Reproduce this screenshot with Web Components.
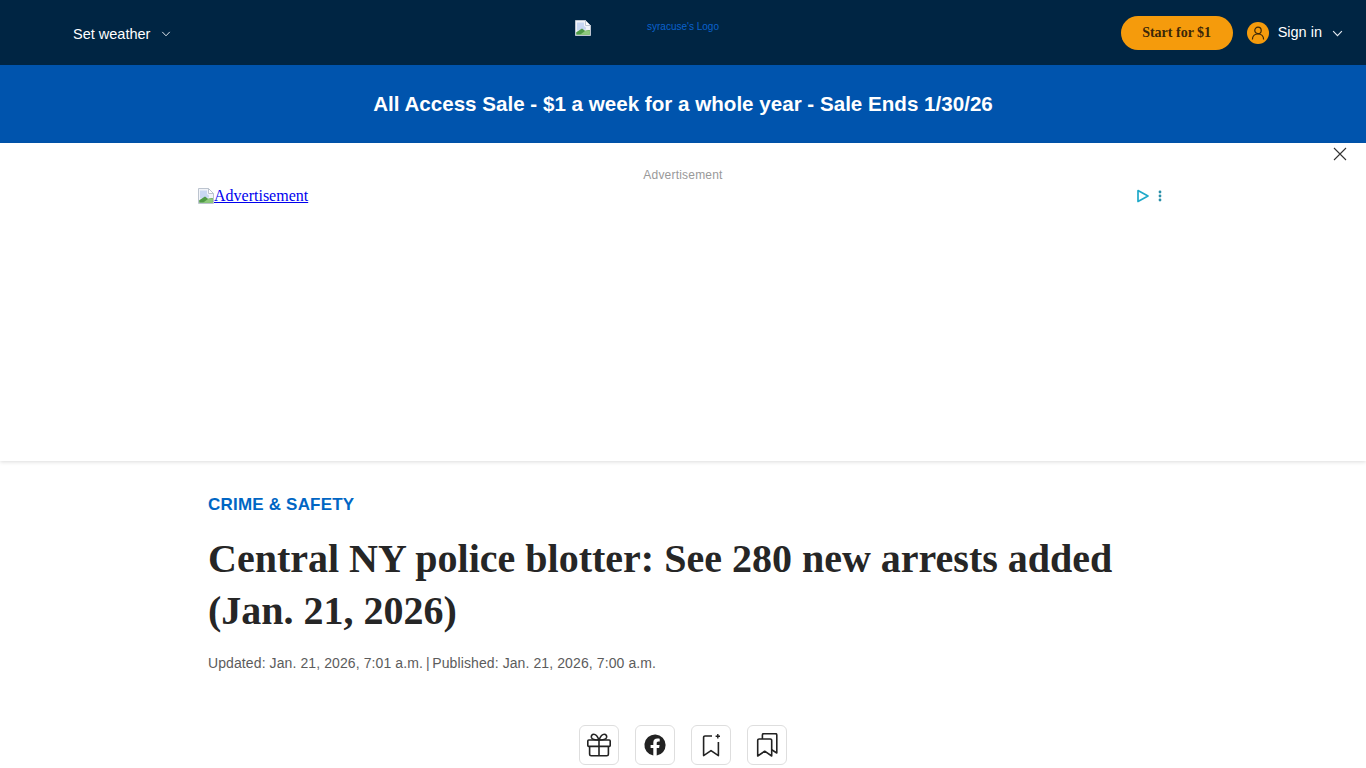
<!DOCTYPE html>
<html lang="en">
<head>
<meta charset="utf-8">
<title>Central NY police blotter</title>
<style>
    html, body { margin: 0; padding: 0; background: #fff; overflow: hidden; height: 768px; }
    body { font-family: "Liberation Sans", Arial, sans-serif; }
</style>
</head>
<body>
<site-header></site-header>
<promo-banner>All Access Sale - $1 a week for a whole year - Sale Ends 1/30/26</promo-banner>
<ad-slot></ad-slot>
<article-head
    section="CRIME &amp; SAFETY"
    headline="Central NY police blotter: See 280 new arrests added (Jan. 21, 2026)"
    updated="Updated: Jan. 21, 2026, 7:01 a.m."
    published="Published: Jan. 21, 2026, 7:00 a.m."></article-head>
<share-bar>
    <icon-button label="Gift this article">
        <svg viewBox="0 0 24 24" width="24" height="24" fill="none" stroke="#222" stroke-width="1.6" stroke-linejoin="round">
            <rect x="0.8" y="7" width="22.4" height="6.4" rx="1"/>
            <path d="M2.6 13.4v7.8a1.6 1.6 0 0 0 1.6 1.6h15.6a1.6 1.6 0 0 0 1.6-1.6v-7.8M12 7v15.8"/>
            <path d="M12 7C10.5 3.2 8.6 1.2 6.8 1.2 5 1.2 4 2.8 4.4 4.4 4.9 6.2 7 7 12 7ZM12 7c1.5-3.8 3.4-5.8 5.2-5.8 1.8 0 2.8 1.6 2.4 3.2-.5 1.8-2.6 2.6-7.6 2.6Z"/>
        </svg>
    </icon-button>
    <icon-button label="Share on Facebook">
        <svg viewBox="0 0 24 24" width="24" height="24">
            <path fill="#222" d="M22.6 12A10.6 10.6 0 1 0 10.3 22.5v-7.4H7.6V12h2.7V9.7c0-2.7 1.6-4.1 4-4.1 1.2 0 2.4.2 2.4.2v2.6h-1.3c-1.3 0-1.7.8-1.7 1.7V12h2.9l-.5 3.1h-2.4v7.4A10.6 10.6 0 0 0 22.6 12Z"/>
        </svg>
    </icon-button>
    <icon-button label="Save article">
        <svg viewBox="0 0 24 24" width="24" height="24" fill="none" stroke="#222" stroke-width="1.6" stroke-linejoin="round">
            <path d="M13 3H6A1.4 1.4 0 0 0 4.6 4.4v18.2l7.4-5 7.4 5V9"/>
            <path stroke-width="1.4" d="M18.8 1v4.4M16.6 3.2H21"/>
        </svg>
    </icon-button>
    <icon-button label="Saved articles">
        <svg viewBox="0 0 24 24" width="24" height="24" fill="none" stroke="#222" stroke-width="1.6" stroke-linejoin="round">
            <path d="M2.7 7.4A1.4 1.4 0 0 1 4.1 6h11.2a1.4 1.4 0 0 1 1.4 1.4v15.6l-7-4.8-7 4.8Z"/>
            <path d="M7.4 6V2a1.4 1.4 0 0 1 1.4-1.4h11.6A1.4 1.4 0 0 1 21.8 2v18l-5.1-3.2"/>
        </svg>
    </icon-button>
</share-bar>

<script>
// broken image glyph the browser shows when a picture fails
const brokenImg = `
    <svg viewBox="0 0 16 16" width="16" height="16" aria-hidden="true" style="flex:none">
        <path d="M.5.5h10l5 5v10H.5z" fill="#f2f4f9" stroke="#bcc4cf"/>
        <path d="M10.5.5l5 5h-5z" fill="#fff" stroke="#bcc4cf"/>
        <path d="M2 2.5h7v3.5l2 1.5v2l-9 1z" fill="#c8d7f2"/>
        <path d="M1.2 14.8v-2.6L7 8.6l3 2.2 4.8-.8v4.8z" fill="#4f9a45"/>
        <path d="M5 14.8 10 11l4.8-.4v4.2z" fill="#8fca7c"/>
    </svg>`;

const chevron = `
    <svg viewBox="0 0 12 8" width="11" height="7" fill="none" stroke="currentColor" stroke-width="1.3" aria-hidden="true">
        <path d="M1 1.2 6 6.4l5-5.2"/>
    </svg>`;

class SiteHeader extends HTMLElement {
    constructor() {
        super();
        this.attachShadow({ mode: "open" });
    }

    connectedCallback() {
        this.shadowRoot.innerHTML = `
            <style>
                :host {
                    display: grid;
                    grid-template-columns: 575px 1fr auto;
                    height: 65px;
                    background: #002543;
                    color: #fff;
                    box-sizing: border-box;
                    padding-right: 23px;
                    font-family: "Liberation Sans", Arial, sans-serif;
                }
                .weather {
                    display: flex;
                    align-items: center;
                    gap: 11px;
                    padding-left: 73px;
                    font-size: 14.5px;
                    padding-top: 2px;
                }
                .weather svg { margin-top: 1px; color: #e4eaf0; }
                .logo {
                    display: flex;
                    align-items: flex-start;
                    padding-top: 20px;
                    font-size: 10px;
                    line-height: 14px;
                    color: #0b62cc;
                }
                .logo span { margin-left: 56px; }
                .actions { display: flex; align-items: center; }
                .start {
                    display: flex;
                    align-items: center;
                    justify-content: center;
                    width: 112px;
                    height: 34px;
                    margin-top: 1px;
                    border-radius: 17px;
                    background: #f59b0c;
                    color: #3b2708;
                    font: bold 14px "Liberation Serif", "Times New Roman", serif;
                }
                .avatar {
                    width: 22px;
                    height: 22px;
                    margin-left: 14px;
                    margin-top: 1px;
                    border-radius: 50%;
                    background: #f59b0c;
                    display: flex;
                    align-items: center;
                    justify-content: center;
                }
                .signin { margin-left: 9px; font-size: 14.5px; margin-top: -2px; }
                .actions > svg { margin-left: 10px; margin-top: 2px; color: #e4eaf0; }
            </style>
            <div class="weather">Set weather ${chevron.replace('width="11" height="7"', 'width="10" height="6"')}</div>
            <div class="logo">${brokenImg}<span>syracuse's Logo</span></div>
            <div class="actions">
                <div class="start">Start for $1</div>
                <div class="avatar">
                    <svg viewBox="0 0 16 16" width="16" height="16" fill="none" stroke="#3b2708" stroke-width="1.2">
                        <circle cx="8" cy="5.4" r="3.2"/>
                        <path d="M2.4 14.4c0-3.4 2.4-5.6 5.6-5.6s5.6 2.2 5.6 5.6"/>
                    </svg>
                </div>
                <span class="signin">Sign in</span>
                ${chevron}
            </div>
        `;
    }
}

class PromoBanner extends HTMLElement {
    constructor() {
        super();
        this.attachShadow({ mode: "open" });
    }

    connectedCallback() {
        this.shadowRoot.innerHTML = `
            <style>
                :host {
                    display: flex;
                    align-items: center;
                    justify-content: center;
                    height: 78px;
                    background: #0054ad;
                    color: #fff;
                    font: bold 20.6px "Liberation Sans", Arial, sans-serif;
                }
            </style>
            <slot></slot>
        `;
    }
}

class AdSlot extends HTMLElement {
    constructor() {
        super();
        this.attachShadow({ mode: "open" });
    }

    connectedCallback() {
        this.shadowRoot.innerHTML = `
            <style>
                :host {
                    display: block;
                    position: relative;
                    height: 318px;
                    box-sizing: border-box;
                    padding-top: 24px;
                    background: #fff;
                    box-shadow: 0 1px 4px rgba(0, 0, 0, 0.14);
                }
                .label {
                    text-align: center;
                    font: 12px/15px "Liberation Sans", Arial, sans-serif;
                    letter-spacing: 0.2px;
                    color: #999;
                    padding-top: 1px;
                }
                .unit {
                    display: flex;
                    justify-content: space-between;
                    align-items: center;
                    width: 970px;
                    height: 18px;
                    margin: 3px 0 0 198px;
                    padding-top: 1px;
                }
                a {
                    display: flex;
                    align-items: center;
                    color: #0000ee;
                    font: 16px/18px "Liberation Serif", "Times New Roman", serif;
                    text-decoration: underline;
                }
                .choices { display: flex; align-items: center; gap: 7px; margin-right: 5px; }
                .close {
                    position: absolute;
                    top: 4px;
                    right: 19px;
                    width: 14px;
                    height: 14px;
                }
            </style>
            <div class="label">Advertisement</div>
            <div class="unit">
                <a href="#">${brokenImg}Advertisement</a>
                <div class="choices">
                    <svg viewBox="0 0 14 14" width="14" height="14" fill="none" stroke="#1fa9c9" stroke-width="1.7" stroke-linejoin="round">
                        <path d="M2 1.6v10.8L12 7z"/>
                    </svg>
                    <svg viewBox="0 0 6 14" width="6" height="14" fill="#2b8fa8">
                        <circle cx="3" cy="3" r="1.4"/><circle cx="3" cy="7" r="1.4"/><circle cx="3" cy="11" r="1.4"/>
                    </svg>
                </div>
            </div>
            <svg class="close" viewBox="0 0 14 14" fill="none" stroke="#333" stroke-width="1.1">
                <path d="M1 1l12 12M13 1 1 13"/>
            </svg>
        `;
    }
}

class ArticleHead extends HTMLElement {
    constructor() {
        super();
        this.attachShadow({ mode: "open" });
    }

    connectedCallback() {
        const section = this.getAttribute('section') || '';
        const headline = this.getAttribute('headline') || '';
        const updated = this.getAttribute('updated') || '';
        const published = this.getAttribute('published') || '';

        this.shadowRoot.innerHTML = `
            <style>
                :host {
                    display: block;
                    width: 950px;
                    margin-left: 208px;
                    padding-top: 35px;
                    font-family: "Liberation Sans", Arial, sans-serif;
                }
                .section {
                    font-weight: bold;
                    font-size: 17px;
                    line-height: 18px;
                    color: #0066c4;
                    letter-spacing: 0.2px;
                }
                h1 {
                    margin: 19px 0 0;
                    font: bold 40px/52px "Liberation Serif", "Times New Roman", serif;
                    color: #262626;
                }
                .meta {
                    margin-top: 17px;
                    font-size: 14px;
                    line-height: 18px;
                    letter-spacing: 0.1px;
                    color: #5c5c5c;
                }
                .sep { margin: 0 2.5px 0 3px; }
            </style>
            <div class="section">${section}</div>
            <h1>${headline}</h1>
            <div class="meta">${updated}<span class="sep">|</span>${published}</div>
        `;
    }
}

class ShareBar extends HTMLElement {
    constructor() {
        super();
        this.attachShadow({ mode: "open" });
    }

    connectedCallback() {
        this.shadowRoot.innerHTML = `
            <style>
                :host {
                    display: flex;
                    justify-content: center;
                    gap: 16px;
                    margin-top: 53px;
                }
            </style>
            <slot></slot>
        `;
    }
}

class IconButton extends HTMLElement {
    constructor() {
        super();
        this.attachShadow({ mode: "open" });
    }

    connectedCallback() {
        this.setAttribute('role', 'button');
        this.setAttribute('aria-label', this.getAttribute('label') || '');
        this.shadowRoot.innerHTML = `
            <style>
                :host {
                    display: flex;
                    align-items: center;
                    justify-content: center;
                    width: 40px;
                    height: 40px;
                    box-sizing: border-box;
                    border: 1px solid #dedede;
                    border-radius: 6px;
                    background: #fff;
                }
            </style>
            <slot></slot>
        `;
    }
}

customElements.define("site-header", SiteHeader);
customElements.define("promo-banner", PromoBanner);
customElements.define("ad-slot", AdSlot);
customElements.define("article-head", ArticleHead);
customElements.define("share-bar", ShareBar);
customElements.define("icon-button", IconButton);
</script>
</body>
</html>
